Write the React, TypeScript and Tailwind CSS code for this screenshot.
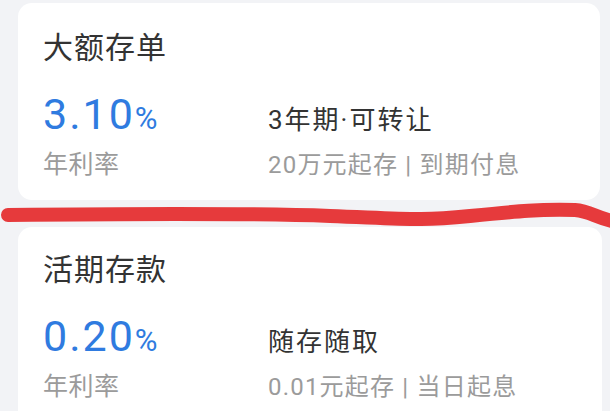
import React from "react";

const font = { fontFamily: '"Noto Sans CJK SC", "Noto Sans", sans-serif' };
const mixed = { fontFamily: 'Roboto, "Noto Sans CJK SC", sans-serif' };

function Card({
  title,
  rate,
  desc,
  sub,
  className,
}: {
  title: string;
  rate: string;
  desc: string;
  sub: string;
  className: string;
}) {
  return (
    <div className={"bg-white rounded-[14px] ml-[18px] pl-[25px] " + className}>
      <div className="text-[30px] leading-[30px] tracking-[1px] text-[#333333]">{title}</div>
      <div className="flex items-baseline mt-[33px]">
        <div className="w-[225px] text-[#2f7be0] leading-[42px]" style={mixed}>
          <span className="text-[43px] tracking-[2px]">{rate}</span>
          <span className="text-[31px]">%</span>
        </div>
        <div className="text-[26px] leading-[26px] tracking-[2px] text-[#333333]" style={mixed}>{desc}</div>
      </div>
      <div className="flex items-baseline mt-[5px]">
        <div className="w-[225px] text-[25px] leading-[25px] tracking-[0.5px] text-[#9b9b9b]">年利率</div>
        <div className="text-[24px] leading-[25px] tracking-[1.2px] text-[#9b9b9b]" style={mixed}>{sub}</div>
      </div>
    </div>
  );
}

export default function App() {
  return (
    <div className="relative w-[610px] h-[411px] overflow-hidden bg-[#f2f3f6] pt-[3px]" style={font}>
      <Card
        title="大额存单"
        rate="3.10"
        desc="3年期·可转让"
        sub="20万元起存 | 到期付息"
        className="h-[197px] mr-[10px] pt-[27px]"
      />
      <Card
        title="活期存款"
        rate="0.20"
        desc="随存随取"
        sub="0.01元起存 | 当日起息"
        className="mt-[27px] h-[220px] mr-[8px] pt-[25px]"
      />
      <svg className="absolute left-0 top-0 pointer-events-none" width="610" height="411" viewBox="0 0 610 411">
        <path
          d="M8 215 C 100 214, 250 213, 330 216 S 420 221, 470 216 S 540 209, 575 210 C 590 211, 596 218, 616 222"
          fill="none"
          stroke="#e63a3c"
          strokeWidth="14"
          strokeLinecap="round"
          strokeLinejoin="round"
        />
      </svg>
    </div>
  );
}
